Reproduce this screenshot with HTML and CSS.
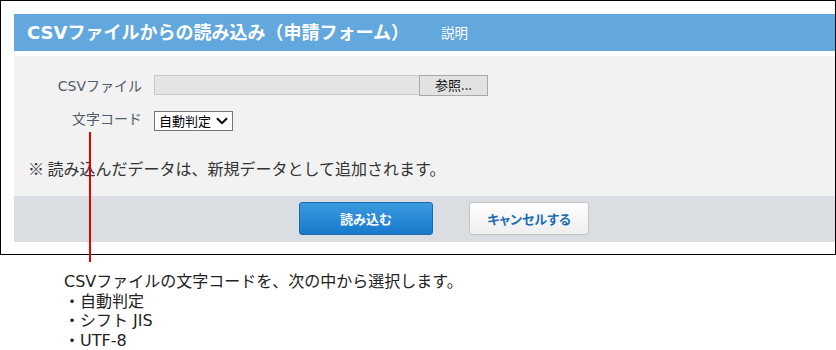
FILE: index.html
```html
<!DOCTYPE html>
<html lang="ja">
<head>
<meta charset="utf-8">
<title>CSVファイルからの読み込み</title>
<link rel="stylesheet" href="styles.css">
</head>
<body>
<div class="page">
  <div class="frame">
    <div class="header">
      <h1 class="title">CSVファイルからの読み込み（申請フォーム）</h1>
      <a class="help">説明</a>
    </div>
    <div class="form">
      <div class="row">
        <div class="label">CSVファイル</div>
        <div class="file">
          <div class="file-field"></div>
          <button class="browse">参照...</button>
        </div>
      </div>
      <div class="row row-select">
        <div class="label">文字コード</div>
        <div class="select">
          <span>自動判定</span>
          <svg class="chev" width="12" height="8" viewBox="0 0 12 8"><path d="M1 1.2 L6 6.2 L11 1.2" fill="none" stroke="#000" stroke-width="2"/></svg>
        </div>
      </div>
      <p class="note">※ 読み込んだデータは、新規データとして追加されます。</p>
    </div>
    <div class="footer">
      <button class="btn btn-primary">読み込む</button>
      <button class="btn btn-cancel">キャンセルする</button>
    </div>
  </div>
  <div class="pointer"></div>
  <div class="annotation">
    <div class="line">CSVファイルの文字コードを、次の中から選択します。</div>
    <div class="line">・自動判定</div>
    <div class="line">・シフト JIS</div>
    <div class="line">・UTF-8</div>
  </div>
</div>
</body>
</html>
```

FILE: styles.css
```css
html, body {
  margin: 0;
  padding: 0;
  background: #fff;
}
body {
  font-family: "DejaVu Sans", "Noto Sans CJK JP", sans-serif;
  color: #222;
}
.page {
  position: relative;
  width: 836px;
  height: 350px;
}
.frame {
  box-sizing: border-box;
  width: 836px;
  height: 255px;
  border: 1px solid #000;
  padding: 13px 0 0 13px;
}
.header {
  display: flex;
  align-items: center;
  height: 37px;
  background: #62a7dd;
  padding-left: 13px;
}
.title {
  margin: 0;
  font-size: 18px;
  font-weight: bold;
  color: #fff;
  line-height: 37px;
}
.help {
  margin-left: 32px;
  font-family: "Noto Sans CJK JP", sans-serif;
  font-size: 13.5px;
  color: #fff;
  line-height: 37px;
}
.form {
  margin-top: 5px;
  background: #f2f2f2;
  height: 140px;
  box-sizing: border-box;
  padding-top: 19px;
}
.row {
  display: grid;
  grid-template-columns: 128px auto;
  column-gap: 12px;
  align-items: center;
  height: 21px;
}
.row-select {
  margin-top: 15px;
  height: 20px;
}
.label {
  text-align: right;
  font-size: 14px;
  color: #515c69;
  line-height: 20px;
}
.row-select .label {
  margin-top: -5px;
}
.file {
  display: flex;
  align-items: flex-start;
  height: 21px;
}
.file-field {
  box-sizing: border-box;
  width: 265px;
  height: 20px;
  background: #e4e4e4;
  border: 1px solid #c9c9c9;
  border-right: none;
}
.browse {
  box-sizing: border-box;
  width: 69px;
  height: 21px;
  margin: 0;
  padding: 0 0 2px;
  background: #e2e2e2;
  border: 1px solid #a9a9a9;
  border-radius: 0;
  font-family: "Noto Sans CJK JP", sans-serif;
  font-size: 13px;
  color: #111;
  line-height: 18px;
}
.select {
  box-sizing: border-box;
  width: 79px;
  height: 20px;
  display: flex;
  align-items: center;
  justify-content: space-between;
  background: #fff;
  border: 1px solid #767676;
  padding: 0 4px 0 4px;
  font-family: "Noto Sans CJK JP", sans-serif;
  font-size: 13px;
  color: #000;
  line-height: 18px;
}
.chev {
  display: block;
}
.note {
  margin: 27px 0 0 14px;
  font-family: "Noto Sans CJK JP", sans-serif;
  font-size: 16px;
  line-height: 20px;
  color: #333;
}
.footer {
  height: 46px;
  background: #dadde1;
  box-sizing: border-box;
  padding: 6px 0 0 285px;
  display: flex;
  align-items: flex-start;
  gap: 36px;
}
.btn {
  box-sizing: border-box;
  height: 33px;
  margin: 0;
  border-radius: 3px;
  font-family: "Noto Sans CJK JP", sans-serif;
  font-size: 13px;
  font-weight: bold;
  line-height: 31px;
  padding: 0;
}
.btn-primary {
  width: 134px;
  color: #fff;
  background: linear-gradient(#3b9be0, #1679cb);
  border: 1px solid #1d68a8;
}
.btn-cancel {
  width: 120px;
  color: #1c6db2;
  background: linear-gradient(#ffffff, #eeeeee);
  border: 1px solid #c3c3c3;
  font-feature-settings: "palt";
}
.pointer {
  position: absolute;
  left: 89px;
  top: 132px;
  width: 2px;
  height: 130px;
  background: #e60000;
}
.annotation {
  margin: 17px 0 0 64px;
  font-size: 16px;
  color: #222;
}
.line {
  height: 19.5px;
  line-height: 19.5px;
}
```
